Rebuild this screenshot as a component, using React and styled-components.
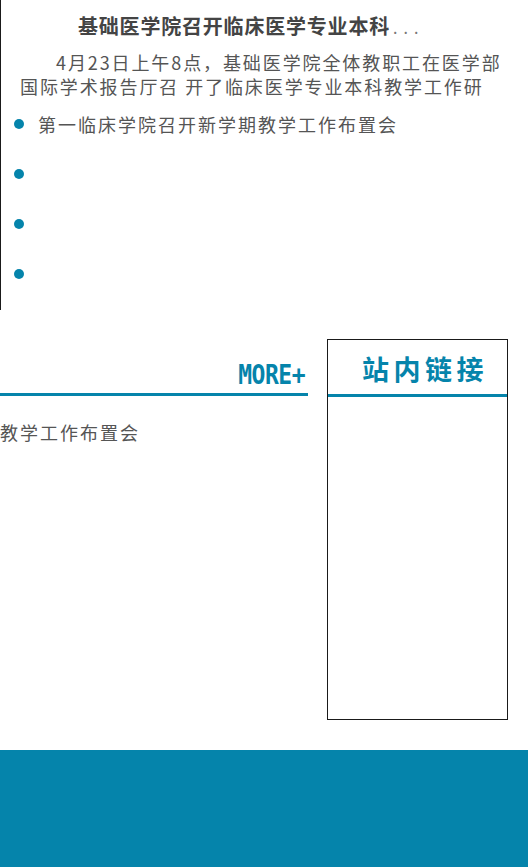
import styled, { createGlobalStyle } from "styled-components";

const GlobalStyle = createGlobalStyle`
  html, body {
    margin: 0;
    padding: 0;
    background: #fff;
  }
  body {
    font-family: "Noto Sans CJK SC", "Noto Sans", sans-serif;
    overflow: hidden;
  }
`;

const blue = "#0584ab";

const Page = styled.div`
  width: 528px;
  display: flex;
  flex-direction: column;
`;

const NewsPanel = styled.div`
  height: 310px;
  box-sizing: border-box;
  border-left: 1px solid #1a1a1a;
  padding-top: 11px;
  display: flex;
  flex-direction: column;
`;

const Title = styled.h3`
  margin: 0;
  padding-left: 77px;
  font-size: 20px;
  line-height: 30px;
  font-weight: bold;
  color: #444;
  letter-spacing: 0.8px;
  white-space: nowrap;
`;

const Dots = styled.span`
  font-weight: normal;
  font-size: 16px;
  color: #777;
  letter-spacing: 6px;
  padding-left: 3px;
`;

const Summary = styled.p`
  margin: 8px 0 0;
  padding-left: 19px;
  font-size: 18px;
  line-height: 24px;
  color: #555;
  letter-spacing: 1.9px;
`;

const SummaryLine = styled.span`
  display: block;
  white-space: nowrap;
  padding-left: ${(p) => p.$indent || 0}px;
`;

const List = styled.ul`
  margin: 1px 0 0;
  padding: 0;
  list-style: none;
`;

const Item = styled.li`
  height: 50px;
  display: flex;
  align-items: center;
  gap: 14px;
  padding-left: 13px;
  font-size: 18px;
  color: #555;
  letter-spacing: 2px;
  white-space: nowrap;
`;

const Dot = styled.span`
  width: 10px;
  height: 10px;
  border-radius: 50%;
  background: ${blue};
  flex: none;
`;

const Columns = styled.div`
  display: flex;
  align-items: flex-start;
  margin-top: 29px;
  gap: 19px;
`;

const MainColumn = styled.div`
  width: 308px;
  display: flex;
  flex-direction: column;
`;

const SectionHead = styled.div`
  height: 57px;
  box-sizing: border-box;
  border-bottom: 3px solid ${blue};
  display: flex;
  justify-content: flex-end;
  align-items: flex-end;
  padding: 0 3px 3px 0;
`;

const More = styled.a`
  font-family: "DejaVu Sans Mono", "Liberation Mono", monospace;
  font-weight: bold;
  font-size: 23px;
  line-height: 26px;
  color: ${blue};
  text-decoration: none;
  letter-spacing: -0.5px;
  transform: scaleY(1.12);
  transform-origin: bottom;
`;

const SectionText = styled.div`
  margin-top: 24px;
  font-size: 18px;
  line-height: 24px;
  color: #555;
  letter-spacing: 2px;
  white-space: nowrap;
`;

const LinkBox = styled.div`
  width: 181px;
  height: 381px;
  box-sizing: border-box;
  border: 1px solid #1a1a1a;
`;

const LinkHead = styled.div`
  height: 57px;
  box-sizing: border-box;
  border-bottom: 3px solid ${blue};
  padding: 11px 0 0 34px;
  font-size: 27px;
  line-height: 36px;
  font-weight: bold;
  color: ${blue};
  letter-spacing: 4.5px;
`;

const Footer = styled.footer`
  margin-top: 30px;
  height: 120px;
  background: ${blue};
`;

export default function App() {
  return (
    <>
      <GlobalStyle />
      <Page>
        <NewsPanel>
          <Title>
            基础医学院召开临床医学专业本科<Dots>...</Dots>
          </Title>
          <Summary>
            <SummaryLine $indent={36}>4月23日上午8点，基础医学院全体教职工在医学部</SummaryLine>
            <SummaryLine>国际学术报告厅召 开了临床医学专业本科教学工作研</SummaryLine>
          </Summary>
          <List>
            <Item>
              <Dot />
              第一临床学院召开新学期教学工作布置会
            </Item>
            <Item>
              <Dot />
            </Item>
            <Item>
              <Dot />
            </Item>
            <Item>
              <Dot />
            </Item>
          </List>
        </NewsPanel>
        <Columns>
          <MainColumn>
            <SectionHead>
              <More href="#">MORE+</More>
            </SectionHead>
            <SectionText>教学工作布置会</SectionText>
          </MainColumn>
          <LinkBox>
            <LinkHead>站内链接</LinkHead>
          </LinkBox>
        </Columns>
        <Footer />
      </Page>
    </>
  );
}
